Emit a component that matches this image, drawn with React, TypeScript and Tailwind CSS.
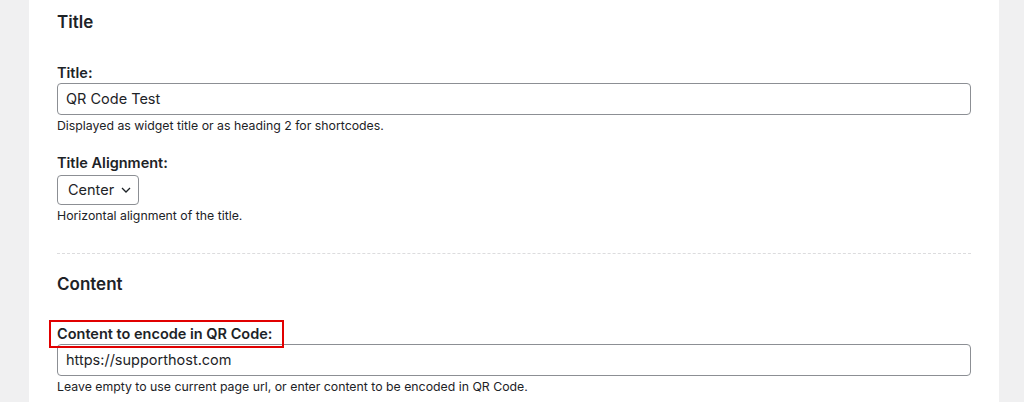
import React from "react";

export default function App() {
  return (
    <div className="flex h-[402px] w-[1024px] overflow-hidden bg-[#f0f0f1] text-[#1d2327] [font-family:Inter,'Liberation_Sans',sans-serif]">
      <div className="w-[29px] shrink-0" />
      <div className="w-[970px] shrink-0 bg-white px-[28px] pt-[10px]">
        <h2 className="text-[17px] font-semibold leading-[24px]">Title</h2>

        <label className="mt-[29px] block text-[14.5px] font-semibold leading-[20px]">Title:</label>
        <div className="flex h-[32px] items-center rounded-[4px] border border-[#8c8f94] px-[8px] text-[14.5px]">
          QR Code Test
        </div>
        <p className="mt-[3px] text-[12.3px] leading-[16px]">Displayed as widget title or as heading 2 for shortcodes.</p>

        <label className="mt-[19px] block text-[14.5px] font-semibold leading-[20px]">Title Alignment:</label>
        <div className="mt-[2px] flex h-[30px] w-[82px] items-center gap-[7px] rounded-[4px] border border-[#8c8f94] pl-[10px] text-[14.5px]">
          <span>Center</span>
          <svg width="10" height="6" viewBox="0 0 10 6" fill="none" stroke="#1d2327" strokeWidth="1.3">
            <path d="M1 1l4 4 4-4" />
          </svg>
        </div>
        <p className="mt-[3px] text-[12.3px] leading-[16px]">Horizontal alignment of the title.</p>

        <div className="mt-[29px] border-t border-dashed border-[#dcdcde]" />

        <h2 className="mt-[18px] text-[17px] font-semibold leading-[24px]">Content</h2>

        <div className="relative mt-[28px]">
          <label className="block text-[14.5px] font-semibold leading-[20px]">Content to encode in QR Code:</label>
          <div className="pointer-events-none absolute left-[-8px] top-[-4px] h-[28px] w-[235px] border-2 border-[#e10000]" />
        </div>
        <div className="flex h-[32px] items-center rounded-[4px] border border-[#8c8f94] px-[8px] text-[14.5px]">
          https://supporthost.com
        </div>
        <p className="mt-[3px] text-[12.3px] leading-[16px]">
          Leave empty to use current page url, or enter content to be encoded in QR Code.
        </p>
      </div>
      <div className="flex-1" />
    </div>
  );
}
